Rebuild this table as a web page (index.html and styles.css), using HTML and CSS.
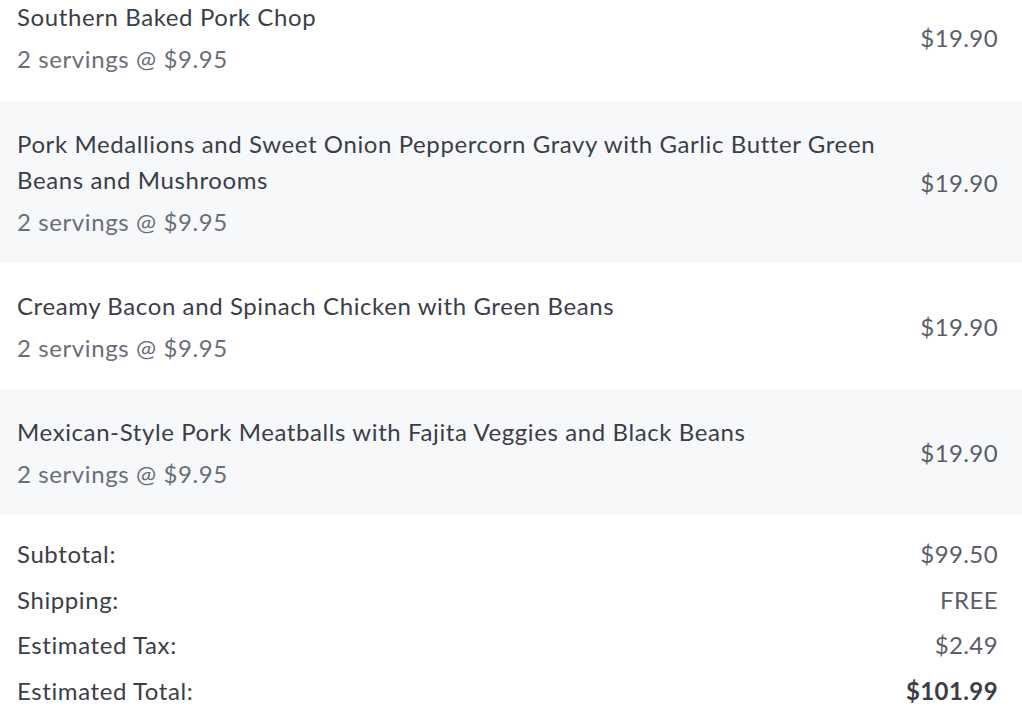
FILE: index.html
```html
<!DOCTYPE html>
<html>
<head>
<meta charset="utf-8">
<link rel="stylesheet" href="styles.css">
</head>
<body>
<div class="cart">
  <ul class="items">
    <li class="item">
      <div class="info">
        <div class="name">Southern Baked Pork Chop</div>
        <div class="qty">2 servings @ $9.95</div>
      </div>
      <div class="price">$19.90</div>
    </li>
    <li class="item alt">
      <div class="info">
        <div class="name">Pork Medallions and Sweet Onion Peppercorn Gravy with Garlic Butter Green Beans and Mushrooms</div>
        <div class="qty">2 servings @ $9.95</div>
      </div>
      <div class="price">$19.90</div>
    </li>
    <li class="item">
      <div class="info">
        <div class="name">Creamy Bacon and Spinach Chicken with Green Beans</div>
        <div class="qty">2 servings @ $9.95</div>
      </div>
      <div class="price">$19.90</div>
    </li>
    <li class="item alt">
      <div class="info">
        <div class="name">Mexican-Style Pork Meatballs with Fajita Veggies and Black Beans</div>
        <div class="qty">2 servings @ $9.95</div>
      </div>
      <div class="price">$19.90</div>
    </li>
  </ul>
  <div class="summary">
    <div class="row"><span class="label">Subtotal:</span><span class="value">$99.50</span></div>
    <div class="row"><span class="label">Shipping:</span><span class="value">FREE</span></div>
    <div class="row"><span class="label">Estimated Tax:</span><span class="value">$2.49</span></div>
    <div class="row total"><span class="label">Estimated Total:</span><span class="value">$101.99</span></div>
  </div>
</div>
</body>
</html>
```
FILE: styles.css
```css
html, body {
  margin: 0;
  padding: 0;
  background: #ffffff;
}
body {
  font-family: "Lato", "Noto Sans", sans-serif;
  font-size: 24px;
  letter-spacing: 0.6px;
  color: #3b3e48;
  overflow: hidden;
}
.cart {
  width: 1022px;
  margin-top: -26px;
}
.items {
  list-style: none;
  margin: 0;
  padding: 0;
}
.item {
  display: flex;
  align-items: center;
  justify-content: space-between;
  padding: 25px 24px 23px 17px;
}
.item:first-child {
  padding-bottom: 24px;
}
.item.alt {
  background: #f7f8fa;
}
.info {
  max-width: 880px;
}
.name {
  line-height: 36px;
  color: #3b3e48;
}
.qty {
  margin-top: 6px;
  line-height: 36px;
  color: #6a6e78;
}
.price {
  letter-spacing: 0.4px;
  color: #5a5e68;
  line-height: 36px;
  white-space: nowrap;
}
.summary {
  padding: 21px 24px 0 17px;
  display: flex;
  flex-direction: column;
  gap: 9.5px;
}
.row {
  display: flex;
  justify-content: space-between;
  line-height: 36px;
}
.row .label {
  color: #3b3e48;
}
.row .value {
  letter-spacing: 0.4px;
  color: #5a5e68;
}
.row.total .value {
  font-weight: 700;
  color: #3b3e48;
}
```
